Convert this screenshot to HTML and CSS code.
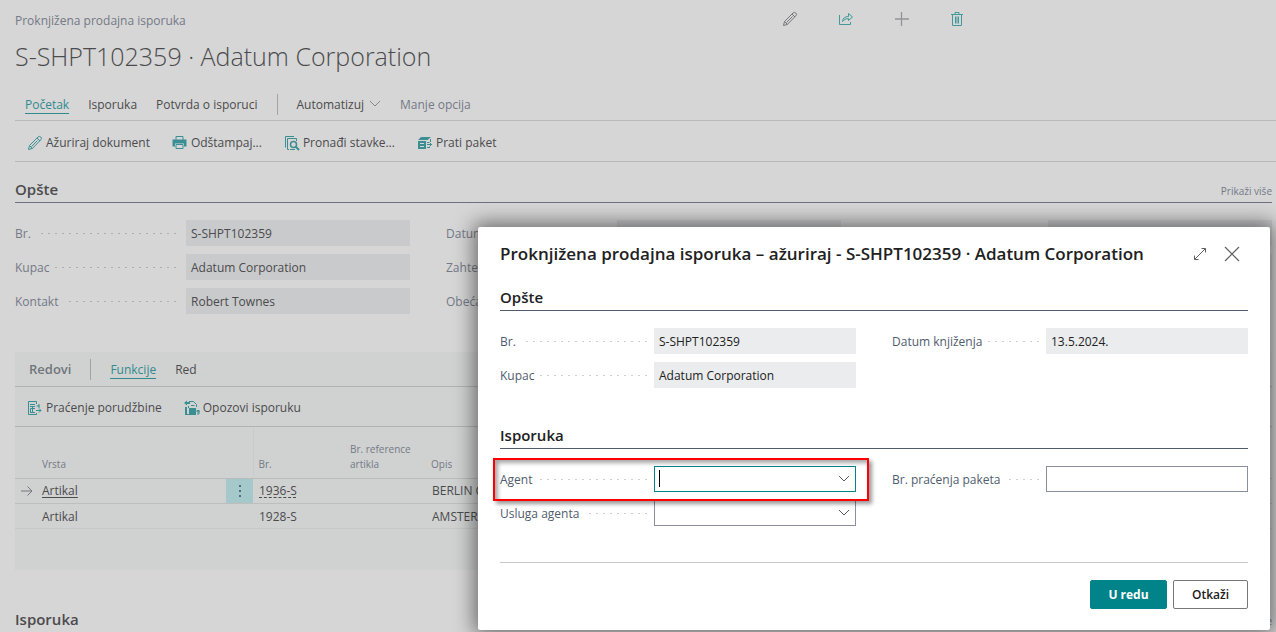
FILE: index.html
```html
<!DOCTYPE html>
<html lang="sr-Latn">
<head>
<meta charset="utf-8">
<title>Proknjižena prodajna isporuka</title>
<link rel="stylesheet" href="styles.css">
</head>
<body>
<svg class="sprite" aria-hidden="true">
  <symbol id="i-pencil" viewBox="0 0 16 16"><path d="M1.500 14.500l1-4L11 2q1.500-1.200 2.800 0t0 2.800L5.400 13.400zM2.500 10.500l3 3M10 3l3 3M4.500 11.500l6-6" fill="none" stroke="currentColor"/></symbol>
  <symbol id="i-chevron" viewBox="0 0 12 8"><path d="M1 1l5 5 5-5" fill="none" stroke="currentColor"/></symbol>
</svg>
<main class="page">
  <header class="page-head">
    <span class="caption">Proknjižena prodajna isporuka</span>
    <div class="tools">
      <button class="icon-btn" aria-label="Uredi"><svg class="icon"><use href="#i-pencil"/></svg></button>
      <button class="icon-btn teal" aria-label="Podeli"><svg class="icon" viewBox="0 0 16 16" fill="none" stroke="currentColor"><path d="M1.500 4v9.500h11V11M4.500 10.500Q5 5.500 10.500 5.500V2.500L14.500 6l-4 3.500V7.500Q6.500 7.500 4.500 10.500z"/></svg></button>
      <button class="icon-btn plus" aria-label="Novo"><svg class="icon" viewBox="0 0 16 16" fill="none" stroke="currentColor"><path d="M7.500 1v14M1 8h14" stroke-width="1.300"/></svg></button>
      <button class="icon-btn teal" aria-label="Izbriši"><svg class="icon" viewBox="0 0 16 16" fill="none" stroke="currentColor"><path d="M1 3.500h12M2.500 3.500v11h9v-11M5 3V1.500h4V3M5.500 5.500v7M7 5.500v7M8.500 5.500v7"/></svg></button>
    </div>
  </header>
  <h1 class="title">S-SHPT102359 · Adatum Corporation</h1>
  <nav class="tabs">
    <a class="tab active" href="#">Početak</a>
    <a class="tab" href="#">Isporuka</a>
    <a class="tab" href="#">Potvrda o isporuci</a>
    <span class="divider"></span>
    <a class="tab" href="#">Automatizuj <svg class="chev"><use href="#i-chevron"/></svg></a>
    <a class="tab muted" href="#">Manje opcija</a>
  </nav>
  <div class="actions">
    <button class="action"><svg class="icon"><use href="#i-pencil"/></svg>Ažuriraj dokument</button>
    <button class="action"><svg class="icon" viewBox="0 0 16 16"><path d="M4 5V1.500h7V5M4 9.500h7v4H4z" fill="none" stroke="currentColor"/><path d="M.5 4.500h14v7H12v-3H3v3H.5z" fill="currentColor"/></svg>Odštampaj...</button>
    <button class="action"><svg class="icon" viewBox="0 0 16 16" fill="none" stroke="currentColor"><path d="M1.500 12.500V1.500H10M5 14.500H3.500v-11h9V6M6 14.500h5"/><circle cx="9.500" cy="9.500" r="3" stroke-width="1.500"/><path d="M11.500 11.500L15 15" stroke-width="2"/></svg>Pronađi stavke...</button>
    <button class="action"><svg class="icon" viewBox="0 0 16 16"><path d="M1 6h8v8H1zM1 5l3-3h10l-3.500 3z" fill="currentColor"/><path d="M3 8.500h4M3 11.500h4" stroke="#d6d6d6"/><path d="M10 7.500h2M13.500 4v3M10 9.500h5M12.500 7.500l2 2-2 2M10 12.500h3" fill="none" stroke="currentColor"/></svg>Prati paket</button>
  </div>

  <section class="group">
    <header class="group-head"><h2>Opšte</h2><a class="more" href="#">Prikaži više</a></header>
    <div class="fields">
      <div class="column">
        <div class="field"><span class="label">Br.</span><span class="dots"></span><output class="value">S-SHPT102359</output></div>
        <div class="field"><span class="label">Kupac</span><span class="dots"></span><output class="value">Adatum Corporation</output></div>
        <div class="field"><span class="label">Kontakt</span><span class="dots"></span><output class="value">Robert Townes</output></div>
      </div>
      <div class="column">
        <div class="field"><span class="label">Datum</span><span class="dots"></span><output class="value"></output></div>
        <div class="field"><span class="label">Zahtev</span><span class="dots"></span><output class="value"></output></div>
        <div class="field"><span class="label">Obeća</span><span class="dots"></span><output class="value"></output></div>
      </div>
      <div class="column">
        <div class="field"><span class="dots"></span><output class="value"></output></div>
        <div class="field"><span class="dots"></span><output class="value"></output></div>
      </div>
    </div>
  </section>

  <section class="lines">
    <div class="lines-tabs">
      <h2>Redovi</h2><span class="divider"></span>
      <a class="tab active" href="#">Funkcije</a><a class="tab" href="#">Red</a>
    </div>
    <div class="lines-actions">
      <button class="action"><svg class="icon" viewBox="0 0 16 16" fill="none" stroke="currentColor"><path d="M9.500 4V1.500h-8v13h8V13M3 4.500h5M3 6.500h5M3.500 12.500v-4H8M5.500 6v7M3 12.500h5"/><path d="M9.500 6h3M12 4v4M9 10.500h5M12 8.500l2 2-2 2"/></svg>Praćenje porudžbine</button>
      <button class="action"><svg class="icon" viewBox="0 0 16 16"><path d="M0 3l3-2.500V2h3v2H3v1.500zM1 7h2v8H1zM5 8h7v7H5z" fill="currentColor"/><path d="M5 1.500h4.500l3 3V7M4.500 6v2M7 5.500h3.500M1 14.500h11M15 10.500h-2v1.500h2zV14h-2" fill="none" stroke="currentColor"/></svg>Opozovi isporuku</button>
    </div>
    <table class="grid">
      <colgroup><col class="c-mark"><col class="c-type"><col class="c-menu"><col class="c-no"><col class="c-ref"><col></colgroup>
      <thead><tr><th></th><th>Vrsta</th><th></th><th class="edge">Br.</th><th>Br. reference artikla</th><th>Opis</th></tr></thead>
      <tbody>
        <tr><td class="mark"><svg class="arrow" viewBox="0 0 14 12" fill="none" stroke="currentColor"><path d="M1 6h11M7.500 1.500L12 6l-4.500 4.500"/></svg></td><td><a class="link" href="#">Artikal</a></td><td class="menu"><button class="row-menu" aria-label="Još opcija"><svg class="kebab" viewBox="0 0 4 14" fill="currentColor"><path d="M1 1h2v2H1zM1 6h2v2H1zM1 11h2v2H1z"/></svg></button></td><td class="code"><a class="drill" href="#">1936-S</a></td><td></td><td class="code">BERLIN G</td></tr>
        <tr><td></td><td>Artikal</td><td></td><td class="code">1928-S</td><td></td><td class="code">AMSTER</td></tr>
      </tbody>
    </table>
  </section>

  <section class="group next">
    <header class="group-head"><h2>Isporuka</h2><a class="more" href="#">Prikaži više</a></header>
  </section>
</main>

<div class="dialog" role="dialog" aria-labelledby="dlg-title">
  <header class="dialog-head">
    <h2 id="dlg-title">Proknjižena prodajna isporuka – ažuriraj - S-SHPT102359 · Adatum Corporation</h2>
    <div class="dialog-tools">
      <button class="icon-btn" aria-label="Proširi"><svg class="icon" viewBox="0 0 16 16" fill="none" stroke="currentColor"><path d="M2.500 13.500l11-11M9.500 2.500h4v4M2.500 9.500v4h4"/></svg></button>
      <button class="icon-btn" aria-label="Zatvori"><svg class="icon" viewBox="0 0 16 16" fill="none" stroke="currentColor" stroke-width="1.200"><path d="M1 1l14 14M15 1L1 15"/></svg></button>
    </div>
  </header>
  <section class="dialog-group">
    <h3>Opšte</h3>
    <div class="fields">
      <div class="column">
        <div class="field"><span class="label">Br.</span><span class="dots"></span><output class="value">S-SHPT102359</output></div>
        <div class="field"><span class="label">Kupac</span><span class="dots"></span><output class="value">Adatum Corporation</output></div>
      </div>
      <div class="column">
        <div class="field"><span class="label">Datum knjiženja</span><span class="dots"></span><output class="value">13.5.2024.</output></div>
      </div>
    </div>
  </section>
  <section class="dialog-group">
    <h3>Isporuka</h3>
    <div class="fields">
      <div class="column">
        <div class="field marked"><label class="label" for="agent">Agent</label><span class="dots"></span><span class="combo focused"><select id="agent"><option></option></select><svg class="chev"><use href="#i-chevron"/></svg><span class="caret"></span></span></div>
        <div class="field"><label class="label" for="service">Usluga agenta</label><span class="dots"></span><span class="combo"><select id="service"><option></option></select><svg class="chev"><use href="#i-chevron"/></svg></span></div>
      </div>
      <div class="column">
        <div class="field"><label class="label" for="tracking">Br. praćenja paketa</label><span class="dots"></span><input class="text" id="tracking" type="text"></div>
      </div>
    </div>
  </section>
  <footer class="dialog-foot">
    <button class="btn primary">U redu</button>
    <button class="btn">Otkaži</button>
  </footer>
</div>
</body>
</html>
```

FILE: styles.css
```css
* { box-sizing: border-box; }
body {
  margin: 0;
  height: 100vh;
  overflow: hidden;
  position: relative;
  background: #d6d6d6;
  color: #4b4b4d;
  font: 12px/18px "Open Sans", "Noto Sans", sans-serif;
}
h1, h2, h3 { margin: 0; font-weight: 600; }
a { color: inherit; text-decoration: none; }
button { font: inherit; color: inherit; background: none; border: 0; padding: 0; }
.sprite { position: absolute; width: 0; height: 0; }
.icon { width: 16px; height: 16px; display: block; flex: none; }
.chev { width: 12px; height: 8px; flex: none; }

.page { padding-left: 15px; }
.page-head { display: flex; height: 38px; align-items: center; }
.caption { flex: 0 0 767px; padding-top: 4px; color: #747986; }
.tools { display: flex; gap: 40px; }
.icon-btn { color: #77777b; }
.teal { color: #42999b; }
.plus { color: #949498; }
.title { font-size: 25px; line-height: 36px; font-weight: 300; }
.tabs { display: flex; align-items: center; height: 47px; padding: 15px 10px 0; gap: 19px; border-bottom: 1px solid #b9b9bb; }
.tab { display: flex; align-items: center; gap: 5px; line-height: 17px; border-bottom: 1px solid transparent; }
.tab.active { color: #318b8e; border-color: #318b8e; }
.muted { color: #747986; }
.divider { width: 1px; height: 21px; background: #a0a3a9; }
.tabs .chev { color: #85858a; }
.actions { display: flex; align-items: center; height: 41px; gap: 22px; padding: 3px 12px 0; border-bottom: 1px solid #b9b9bb; }
.action { display: flex; align-items: center; gap: 3px; }
.action .icon { color: #3b8f92; }

.group { margin-right: 4px; }
.group.next { padding-top: 22px; }
.group-head { display: flex; justify-content: space-between; align-items: flex-end; height: 41px; padding-bottom: 2px; border-bottom: 1px solid #6b7280; }
.group-head h2 { font-size: 15px; line-height: 21px; }
.more { font-size: 10px; color: #747986; }
.fields { display: grid; grid-template-columns: repeat(3, 1fr); column-gap: 36px; padding-top: 17px; }
.column { display: grid; gap: 8px; align-content: start; }
.field { display: grid; grid-template-columns: auto 1fr 224px; align-items: center; height: 26px; position: relative; }
.field > :last-child { grid-column: 3; }
.label { padding-top: 2px; color: #747986; white-space: nowrap; }
.dots { height: 1px; margin: 0 10px 0 6px; background: repeating-linear-gradient(to left, #adadb0 0 2px, transparent 2px 7px); }
.value { height: 26px; line-height: 28px; padding-left: 5px; background: #c9cacc; }

.lines { margin: 38px 4px 0 0; height: 218px; background: #d0d2d1; }
.lines-tabs { display: flex; align-items: center; height: 35px; padding-left: 14px; gap: 19px; border-bottom: 1px solid #b0b3b6; }
.lines-tabs h2 { font-size: 13px; color: #71757c; }
.lines-tabs .tab { padding-top: 2px; }
.lines-actions { display: flex; height: 40px; padding: 2px 12px 0; gap: 22px; border-bottom: 1px solid #b0b3b4; }
.grid { width: 100%; table-layout: fixed; border-collapse: collapse; }
.c-mark { width: 27px; }
.c-type { width: 184px; }
.c-menu { width: 27px; }
.c-no { width: 92px; }
.c-ref { width: 81px; }
.grid th { height: 51px; padding: 0 5px 6px; vertical-align: bottom; text-align: left; font-size: 10px; line-height: 15px; font-weight: 400; color: #747986; border-bottom: 1px solid #b9bbbc; }
.grid th:nth-child(2) { padding-left: 0; }
.grid .edge { border-left: 1px solid #cacccc; }
.grid td { height: 25px; padding: 1px 0 0; border-bottom: 1px solid #bcbebf; }
.grid tr:last-child td { padding-top: 3px; border-color: #c6c8c8; }
.grid .code { padding-left: 6px; }
.grid .mark { padding-left: 5px; }
.arrow { width: 14px; height: 12px; display: block; color: #77777a; }
.link { text-decoration: underline; text-underline-offset: 2px; }
.drill { text-decoration: underline dashed; text-underline-offset: 2px; }
.grid .menu { background: #a5c8ca; }
.row-menu { display: block; margin: 0 auto; }
.kebab { width: 4px; height: 14px; display: block; color: #4f7073; }

.dialog {
  position: absolute;
  top: 227px;
  right: 6px;
  width: 62%;
  min-width: 792px;
  padding: 11px 22px 21px;
  background: #fff;
  color: #212121;
  border-radius: 2px;
  box-shadow: 0 0 20px 4px rgba(0, 0, 0, .5);
}
.dialog-head { display: flex; justify-content: space-between; align-items: center; height: 32px; }
.dialog-head h2 { font-size: 17px; line-height: 24px; white-space: nowrap; }
.dialog-tools { display: flex; gap: 16px; padding-right: 8px; }
.dialog .icon-btn { color: #606060; }
.dialog h3 { font-size: 15px; line-height: 22px; padding: 1px 0 2px; border-bottom: 1px solid #505c6d; }
.dialog-group { padding-top: 15px; }
.dialog-group + .dialog-group { padding-top: 35px; }
.dialog .fields { grid-template-columns: 1fr 1fr; padding-top: 17px; }
.dialog .field { grid-template-columns: auto 1fr 202px; }
.dialog .label { color: #505c6d; }
.dialog .dots { background: repeating-linear-gradient(to left, #cfcfd2 0 2px, transparent 2px 7px); margin-right: 7px; }
.dialog .value { background: #ebecee; }
.combo { display: grid; position: relative; height: 26px; }
.combo select, .text { appearance: none; width: 100%; height: 26px; margin: 0; padding: 0 5px; border: 1px solid #8a8fa0; border-radius: 0; background: #fff; font: inherit; }
.combo.focused select { border-color: #00838a; }
.combo .chev { position: absolute; right: 6px; top: 9px; color: #505c6d; pointer-events: none; }
.caret { position: absolute; left: 5px; top: 4px; width: 1px; height: 17px; background: #000; }
.marked { z-index: 1; }
.marked::after { content: ""; position: absolute; inset: -8px -13px -9px -7px; border: 2px solid #f00; box-shadow: 3px 3px 4px rgba(0, 0, 0, .4), inset 3px 3px 4px rgba(0, 0, 0, .35); pointer-events: none; }
.dialog-foot { display: flex; justify-content: flex-end; gap: 6px; margin-top: 36px; padding-top: 17px; border-top: 1px solid #c8c8ca; }
.btn { height: 29px; min-width: 75px; border: 1px solid #77777a; border-radius: 2px; font-weight: 600; }
.btn.primary { min-width: 77px; background: #00848a; border-color: #00848a; color: #fff; font-weight: 700; }
```
